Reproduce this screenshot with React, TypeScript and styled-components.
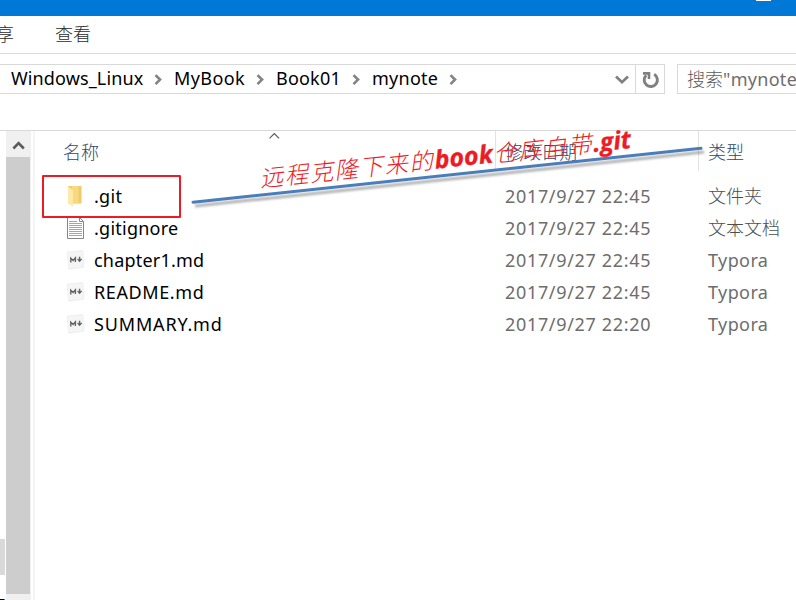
import React from 'react';
import styled, { createGlobalStyle } from 'styled-components';

const GlobalStyle = createGlobalStyle`
  * { box-sizing: border-box; }
  html, body { margin: 0; padding: 0; overflow: hidden; background: #fff; }
  body { font: 300 18px/24px "Noto Sans", "Noto Sans CJK SC", sans-serif; white-space: nowrap; }
`;

const Window = styled.div`
  position: relative;
  width: 796px;
  height: 600px;
  overflow: hidden;
  display: flex;
  flex-direction: column;
  background: #fff;
`;

const TitleBar = styled.div`
  height: 16px;
  flex: none;
  padding-left: 756px;
  background: #0078d7;
`;

const MinimizeGlyph = styled.div`
  width: 15px;
  height: 1px;
  background: #fff;
`;

const RibbonTabs = styled.div`
  height: 38px;
  flex: none;
  display: flex;
  align-items: center;
  gap: 41px;
  margin-left: -4px;
  padding-bottom: 2px;
  border-bottom: 1px solid #dadada;
  color: #2b2b2b;
`;

const Tab = styled.span`
  width: 37px;
  &:first-child { width: 18px; }
`;

const NavRow = styled.div`
  height: 77px;
  flex: none;
  display: flex;
  align-items: flex-start;
  gap: 12px;
  padding-top: 10px;
  border-bottom: 1px solid #d9d9d9;
`;

const AddressBox = styled.div`
  width: 665px;
  flex: none;
  height: 30px;
  display: flex;
  align-items: center;
  border: 1px solid #d9d9d9;
  border-left: 0;
`;

const Crumbs = styled.div`
  flex: 1;
  display: flex;
  align-items: center;
  padding-left: 11px;
  color: #000;
`;

const Crumb = styled.span<{ $width: number; $spacing: number }>`
  width: ${p => p.$width}px;
  height: 28px;
  line-height: 27px;
  font-weight: 400;
  letter-spacing: ${p => p.$spacing}px;
`;

const DropdownCell = styled.div`
  width: 28px;
  display: flex;
  justify-content: center;
  padding-left: 1px;
`;

const RefreshCell = styled.div`
  width: 29px;
  height: 28px;
  display: flex;
  align-items: center;
  justify-content: center;
  padding: 1px 0 0 2px;
  border-left: 1px solid #d9d9d9;
`;

const SearchBox = styled.div`
  flex: 1;
  min-width: 0;
  height: 30px;
  overflow: hidden;
  padding-left: 9px;
  border: 1px solid #d9d9d9;
  border-right: 0;
  line-height: 28px;
  color: #5d5d5d;
`;

const SearchTerm = styled.span`
  font-weight: 400;
  letter-spacing: 0.3px;
  color: #6d6d6d;
`;

const Body = styled.div`
  flex: 1;
  display: flex;
  min-height: 0;
`;

const NavPane = styled.div`
  width: 6px;
  display: flex;
  flex-direction: column;
  padding-top: 408px;
`;

const NavThumb = styled.div`
  width: 5px;
  height: 36px;
  background: #d9d9d9;
`;

const NavEdge = styled.div`
  width: 5px;
  height: 1px;
  margin-top: 24px;
  background: linear-gradient(90deg, #000 4px, #2d8bc0 4px);
`;

const Scrollbar = styled.div`
  width: 25px;
  background: #f0f0f0;
`;

const ScrollUp = styled.div`
  height: 26px;
  display: flex;
  align-items: center;
  justify-content: center;
  padding-top: 2px;
`;

const ScrollThumb = styled.div`
  width: 24px;
  height: 437px;
  background: #cdcdcd;
`;

const PaneDivider = styled.div`
  width: 2px;
  margin-left: 2px;
  background: #f5f5f5;
`;

const FileList = styled.div`
  flex: 1;
  min-width: 0;
`;

const columns = 'display: grid; grid-template-columns: 461px 203px 1fr;';

const HeaderRow = styled.div`
  ${columns}
  height: 40px;
  margin-bottom: 9px;
  color: #2f4668;
`;

const HeaderCell = styled.div`
  position: relative;
  padding: 9px 0 0 9px;
  border-right: 1px solid #e2e2e2;
  &:first-child { padding-left: 28px; }
  &:last-child { border-right: 0; }
`;

const SortMark = styled.svg`
  position: absolute;
  left: 234px;
  top: 1px;
`;

const FileRow = styled.div`
  ${columns}
  height: 32px;
  align-items: center;
  color: #6d6d6d;
`;

const NameCell = styled.div`
  display: flex;
  align-items: center;
  padding-left: 30px;
  color: #000;
  font-weight: 400;
`;

const IconSlot = styled.span`
  width: 29px;
  height: 24px;
  display: flex;
  align-items: center;
`;

const FileName = styled.span<{ $spacing: number }>`
  letter-spacing: ${p => p.$spacing}px;
`;

const DateCell = styled.div`
  padding-left: 9px;
  letter-spacing: 0.67px;
  font-weight: 400;
`;

const TypeCell = styled.div<{ $latin: boolean }>`
  padding-left: 9px;
  font-weight: ${p => (p.$latin ? 400 : 300)};
  letter-spacing: ${p => (p.$latin ? 0.4 : 0)}px;
  color: ${p => (p.$latin ? '#6d6d6d' : '#4d4d4d')};
`;

const Highlight = styled.div`
  position: absolute;
  left: 42px;
  top: 175px;
  width: 139px;
  height: 43px;
  border: 2px solid #ed1c24;
  border-radius: 1px;
`;

const Arrow = styled.svg`
  position: absolute;
  left: 0;
  top: 0;
  pointer-events: none;
`;

const Note = styled.div`
  position: absolute;
  left: 261px;
  top: 162px;
  display: flex;
  align-items: baseline;
  transform: rotate(-6deg);
  transform-origin: 0 100%;
  color: #ed1c24;
  line-height: 30px;
  font-style: italic;
`;

const NoteCjk = styled.span<{ $width: number }>`
  width: ${p => p.$width}px;
  font-family: "Noto Sans CJK SC", sans-serif;
  font-size: 23.5px;
  font-weight: 300;
  letter-spacing: 1.6px;
`;

const NoteLatin = styled.span<{ $width: number }>`
  width: ${p => p.$width}px;
  font-family: "Open Sans", "Noto Sans", sans-serif;
  font-size: 25px;
  font-weight: 700;
  letter-spacing: 0;
  -webkit-text-stroke: 0.3px #ed1c24;
`;

const Chevron = () => (
  <svg width="31" height="14" viewBox="0 0 31 14">
    <path d="M12.5 3.1 L17 7.6 L12.5 12.1" fill="none" stroke="#848484" strokeWidth="2.7" />
  </svg>
);

const FolderIcon = () => (
  <svg width="20" height="24" viewBox="0 0 20 24">
    <path d="M3 2h13.5v17.5H7z" fill="#f2cb68" />
    <path d="M7 2h6.5v17.5H7z" fill="#f8d980" />
    <path d="M3 2.5l5 3.5V22.5l-5-3z" fill="#ffe9a6" />
  </svg>
);

const TextIcon = () => (
  <svg width="20" height="24" viewBox="0 0 20 24">
    <path d="M2.5 1.5h12l4 4v17h-16z" fill="#fff" stroke="#858585" />
    <path d="M14.5 1.5v4h4" fill="none" stroke="#858585" />
    <path
      d="M4 5.5h8M4 7.5h13M4 9.5h13M4 11.5h13M4 13.5h13M4 15.5h13M4 17.5h13M4 19.5h13"
      stroke="#a4a4a4"
    />
  </svg>
);

const MarkdownIcon = () => (
  <svg width="20" height="24" viewBox="0 0 20 24">
    <path d="M2 4l16-2 1.2 17.5L3.5 22z" fill="#f1f1f1" />
    <path d="M2 4l16-1v16L4 21z" fill="#f5f5f5" stroke="#ececec" strokeWidth=".6" />
    <path d="M5.8 14.4v-4.2l2.3 2.2 2.3-2.5v4.2" fill="none" stroke="#646464" strokeWidth="1.4" />
    <path d="M14.6 8.7v4.4M12.6 11.1l2 2.1 2-2.3" fill="none" stroke="#646464" strokeWidth="1.4" />
  </svg>
);

const icons = { folder: FolderIcon, text: TextIcon, markdown: MarkdownIcon };

const files: { name: string; icon: keyof typeof icons; date: string; type: string; spacing: number }[] = [
  { name: '.git', icon: 'folder', date: '2017/9/27 22:45', type: '文件夹', spacing: 0.3 },
  { name: '.gitignore', icon: 'text', date: '2017/9/27 22:45', type: '文本文档', spacing: 0.25 },
  { name: 'chapter1.md', icon: 'markdown', date: '2017/9/27 22:45', type: 'Typora', spacing: 0.2 },
  { name: 'README.md', icon: 'markdown', date: '2017/9/27 22:45', type: 'Typora', spacing: 0.6 },
  { name: 'SUMMARY.md', icon: 'markdown', date: '2017/9/27 22:20', type: 'Typora', spacing: 0.85 },
];

const crumbs = [
  { label: 'Windows_Linux', width: 132, spacing: 0.12 },
  { label: 'MyBook', width: 71, spacing: 0.4 },
  { label: 'Book01', width: 65, spacing: 0.2 },
  { label: 'mynote', width: 66, spacing: 0.25 },
];

export default function App() {
  return (
    <>
      <GlobalStyle />
      <Window>
        <TitleBar><MinimizeGlyph /></TitleBar>
        <RibbonTabs>
          <Tab>享</Tab>
          <Tab>查看</Tab>
        </RibbonTabs>
        <NavRow>
          <AddressBox>
            <Crumbs>
              {crumbs.map(c => (
                <React.Fragment key={c.label}>
                  <Crumb $width={c.width} $spacing={c.spacing}>{c.label}</Crumb>
                  <Chevron />
                </React.Fragment>
              ))}
            </Crumbs>
            <DropdownCell>
              <svg width="16" height="12" viewBox="0 0 16 12">
                <path d="M2 3.6l6 5.6 6-5.6" fill="none" stroke="#808080" strokeWidth="2.8" />
              </svg>
            </DropdownCell>
            <RefreshCell>
              <svg width="18" height="18" viewBox="0 0 18 18">
                <path d="M12.2 3.3A6.6 6.6 0 1 1 4.2 4.2" fill="none" stroke="#808080" strokeWidth="2.9" />
                <path d="M1 1h7.3v7H5.7V3.7H1z" fill="#808080" />
              </svg>
            </RefreshCell>
          </AddressBox>
          <SearchBox>搜索<SearchTerm>"mynote"</SearchTerm></SearchBox>
        </NavRow>
        <Body>
          <NavPane>
            <NavThumb />
            <NavEdge />
          </NavPane>
          <Scrollbar>
            <ScrollUp>
              <svg width="14" height="12" viewBox="0 0 14 12">
                <path d="M1.4 9.5L6.6 4.2l5.2 5.3" fill="none" stroke="#5c5c5c" strokeWidth="2.6" />
              </svg>
            </ScrollUp>
            <ScrollThumb />
          </Scrollbar>
          <PaneDivider />
          <FileList>
            <HeaderRow>
              <HeaderCell>
                名称
                <SortMark width="12" height="8" viewBox="0 0 12 8">
                  <path d="M.5 6.3L5.3 1.5l4.8 4.8" fill="none" stroke="#555" strokeWidth="1.1" />
                </SortMark>
              </HeaderCell>
              <HeaderCell>修改日期</HeaderCell>
              <HeaderCell>类型</HeaderCell>
            </HeaderRow>
            {files.map(f => {
              const Icon = icons[f.icon];
              return (
                <FileRow key={f.name}>
                  <NameCell>
                    <IconSlot><Icon /></IconSlot>
                    <FileName $spacing={f.spacing}>{f.name}</FileName>
                  </NameCell>
                  <DateCell>{f.date}</DateCell>
                  <TypeCell $latin={f.icon === 'markdown'}>{f.type}</TypeCell>
                </FileRow>
              );
            })}
          </FileList>
        </Body>
        <Highlight />
        <Arrow width="796" height="230" viewBox="0 0 796 230">
          <defs>
            <filter id="soft" x="-5%" y="-50%" width="110%" height="200%">
              <feGaussianBlur stdDeviation="1.3" />
            </filter>
          </defs>
          <path d="M195 206L704 152" stroke="#000" strokeOpacity=".3" strokeWidth="3" filter="url(#soft)" />
          <path d="M193 202.2L701 148.3" stroke="#4a7ebb" strokeWidth="3" strokeLinecap="round" />
        </Arrow>
        <Note>
          <NoteCjk $width={176}>远程克隆下来的</NoteCjk>
          <NoteLatin $width={59}>book</NoteLatin>
          <NoteCjk $width={100}>仓库自带</NoteCjk>
          <NoteLatin $width={42}>.git</NoteLatin>
        </Note>
      </Window>
    </>
  );
}
